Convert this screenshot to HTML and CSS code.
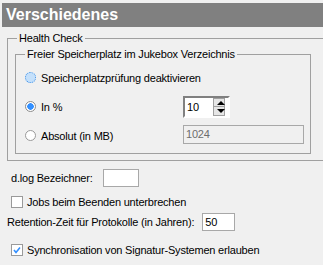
FILE: index.html
```html
<!DOCTYPE html>
<html lang="de">

<head>
    <meta charset="UTF-8">
    <title>Verschiedenes</title>
    <link rel="stylesheet" href="styles.css">
</head>

<body>
    <div class="title">Verschiedenes</div>
    <fieldset class="group outer">
        <legend>Health Check</legend>
        <fieldset class="group inner">
            <legend>Freier Speicherplatz im Jukebox Verzeichnis</legend>
            <div class="options">
                <label class="opt"><input type="radio" name="mode" class="radio hot"><span>Speicherplatzprüfung deaktivieren</span></label>
                <span></span>
                <label class="opt"><input type="radio" name="mode" class="radio" checked><span>In %</span></label>
                <div class="spin">
                    <input type="text" value="10">
                    <div class="spin-btns">
                        <span class="up"></span>
                        <span class="down"></span>
                    </div>
                </div>
                <label class="opt"><input type="radio" name="mode" class="radio"><span>Absolut (in MB)</span></label>
                <input type="text" class="field mb" value="1024" disabled>
            </div>
        </fieldset>
    </fieldset>

    <div class="settings">
        <div class="row first">
            <label for="dlog">d.log Bezeichner:</label>
            <input type="text" id="dlog" class="field dlog">
        </div>
        <label class="row check"><input type="checkbox" class="box"><span>Jobs beim Beenden unterbrechen</span></label>
        <div class="row retention">
            <label for="ret">Retention-Zeit für Protokolle (in Jahren):</label>
            <input type="text" id="ret" class="field years" value="50">
        </div>
        <label class="row check sync"><input type="checkbox" class="box" checked><span>Synchronisation von Signatur-Systemen erlauben</span></label>
    </div>
</body>

</html>
```

FILE: styles.css
```css
body {
    margin: 0;
    padding-top: 3px;
    background-color: #f0f0f0;
    font-family: "Liberation Sans", Arial, sans-serif;
    font-size: 11px;
    letter-spacing: -0.2px;
    color: #000;
    overflow: hidden;
    white-space: nowrap;
}

.title {
    margin-left: 2px;
    height: 24px;
    padding-left: 4px;
    background-color: #808080;
    color: #fff;
    font-size: 16px;
    font-weight: bold;
    line-height: 24px;
    letter-spacing: 0;
}

.group {
    box-sizing: border-box;
    margin: 0;
    border: 1px solid #a0a0a0;
}

.group legend {
    padding: 0 2px;
    line-height: 12px;
}

.outer {
    margin: 5px 0 0 7px;
    padding: 0 0 6px 7px;
    border-right: none;
}

.outer > legend {
    margin-left: 2px;
}

.inner {
    width: 296px;
    margin-top: 4px;
    padding: 0 0 3px 9px;
}

.inner > legend {
    margin-left: 0;
}

.options {
    display: grid;
    grid-template-columns: 158px 121px;
    grid-auto-rows: 29px;
    align-items: center;
    padding-top: 3px;
}

.opt {
    display: flex;
    align-items: center;
    gap: 5px;
}

input {
    font-family: "Liberation Sans", Arial, sans-serif;
    font-size: 11px;
    letter-spacing: -0.2px;
}

.radio {
    appearance: none;
    flex: none;
    box-sizing: border-box;
    width: 11px;
    height: 11px;
    margin: 0;
    border: 1px solid #9a9a9a;
    border-radius: 50%;
    background-color: #fff;
}

.radio.hot {
    border: 1px dotted #3c8fe6;
    background-color: #c4e0fb;
}

.radio:checked {
    background: radial-gradient(circle, #3390ff 0 3px, #fff 3.5px);
    border-color: #8c8c8c;
}

.spin {
    display: flex;
    align-items: center;
    box-sizing: border-box;
    width: 47px;
    height: 22px;
    padding-right: 3px;
    border-style: solid;
    border-width: 2px;
    border-color: #808080 #fff #fff #808080;
    background-color: #fff;
}

.spin input {
    width: 26px;
    margin: 0;
    padding: 0 0 0 2px;
    border: none;
    outline: none;
}

.spin-btns {
    display: flex;
    flex-direction: column;
    width: 14px;
    height: 16px;
    border: 1px solid #a0a0a0;
}

.spin-btns span {
    flex: 1;
    position: relative;
    background-color: #e6e6e6;
}

.spin-btns .up {
    border-bottom: 1px solid #a0a0a0;
}

.spin-btns span::after {
    content: "";
    position: absolute;
    left: 3px;
    border-left: 4px solid transparent;
    border-right: 4px solid transparent;
}

.spin-btns .up::after {
    top: 2px;
    border-bottom: 4px solid #000;
}

.spin-btns .down::after {
    top: 2px;
    border-top: 4px solid #000;
}

.field {
    box-sizing: border-box;
    height: 18px;
    margin: 0;
    padding: 0 0 0 2px;
    border: 1px solid #a8a8a8;
    background-color: #fff;
    color: #000;
}

.field.mb {
    width: 121px;
    height: 19px;
    margin-top: -3px;
    background-color: #f0f0f0;
    color: #6d6d6d;
}

.settings {
    margin-top: 8px;
    padding-left: 11px;
}

.row {
    display: flex;
    align-items: center;
    height: 18px;
}

.row.check {
    margin-top: 6px;
    gap: 4px;
}

.row.retention {
    margin-top: 2px;
    margin-left: -4px;
}

.row.sync {
    margin-top: 10px;
}

.field.dlog {
    width: 36px;
    margin-left: 10px;
}

.field.years {
    width: 33px;
    margin-left: 8px;
}

.box {
    appearance: none;
    flex: none;
    box-sizing: border-box;
    width: 12px;
    height: 12px;
    margin: 0;
    border: 1px solid #9a9a9a;
    background-color: #fff;
}

.box:checked {
    background: #fff url("data:image/svg+xml;utf8,<svg xmlns='http://www.w3.org/2000/svg' width='10' height='10'><path d='M2 5 L4 7.5 L8 2.5' fill='none' stroke='%233390ff' stroke-width='1.6'/></svg>") no-repeat center;
}
```
